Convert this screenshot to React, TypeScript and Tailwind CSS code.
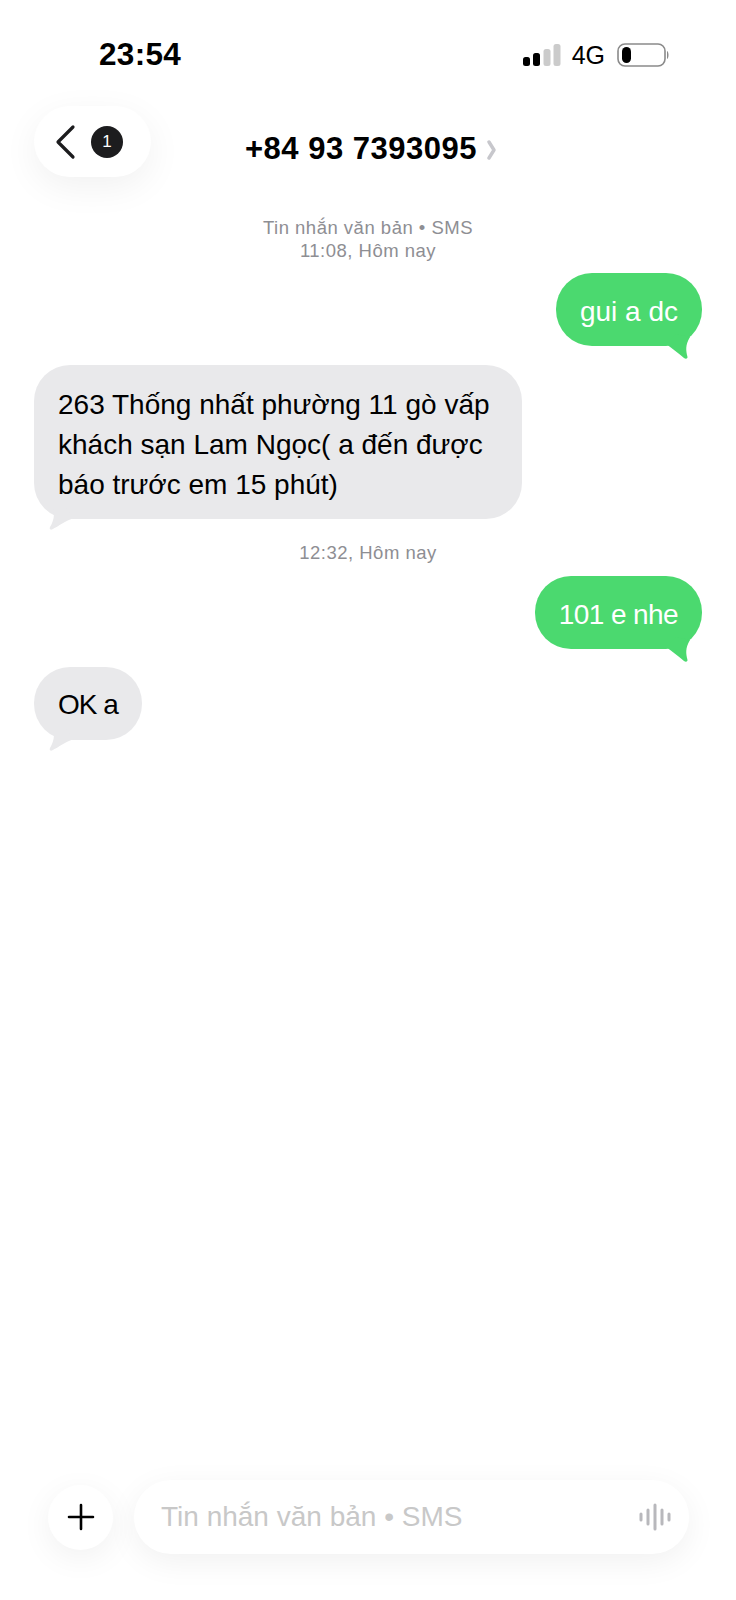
import React from "react";

function Tail({ side, color }: { side: "left" | "right"; color: string }) {
  if (side === "right") {
    return (
      <svg className="absolute right-[12px] bottom-[-14px]" width="26" height="26" viewBox="0 0 26 26">
        <path d="M2 10 C8 14 14 19 20 24 C22 25.5 24 24.5 23.4 22.5 C22 17 21 11 26 3 L12 0 Z" fill={color} />
      </svg>
    );
  }
  return (
    <svg className="absolute left-[14px] bottom-[-11px]" width="26" height="24" viewBox="0 0 26 24">
      <path d="M4 0 C8 8 5 16 2 21 C1 23 2.5 24 4 23.5 C11 20 17 15 26 12 L16 0 Z" fill={color} />
    </svg>
  );
}

function Green({ text, className, textClass }: { text: string; className?: string; textClass?: string }) {
  return (
    <div className={`relative self-end bg-[#4bd96f] rounded-[36px] h-[73px] px-[24px] flex items-center text-white text-[28px] ${className ?? ""}`}>
      <span className={`relative z-10 pt-[5px] ${textClass ?? ""}`}>{text}</span>
      <Tail side="right" color="#4bd96f" />
    </div>
  );
}

function Grey({ children, className }: { children: React.ReactNode; className?: string }) {
  return (
    <div className={`relative self-start bg-[#e9e9eb] rounded-[36px] px-[24px] text-black text-[28px] ${className ?? ""}`}>
      <div className="relative z-10">{children}</div>
      <Tail side="left" color="#e9e9eb" />
    </div>
  );
}

export default function App() {
  return (
    <div className="w-[736px] h-[1600px] bg-white flex flex-col overflow-hidden font-['Liberation_Sans',sans-serif]">
      {/* status bar */}
      <div className="flex items-center justify-between pl-[99px] pr-[66px] pt-[36px] h-[74px]">
        <span className="text-[31.5px] font-bold text-black leading-none tracking-[0.3px]">23:54</span>
        <div className="flex items-center">
          <svg width="38" height="24" viewBox="0 0 38 24" className="mr-[11px]">
            <rect x="0" y="14" width="7" height="9" rx="2.5" fill="#000" />
            <rect x="10" y="10" width="7" height="13" rx="2.5" fill="#000" />
            <rect x="20.5" y="6" width="7" height="17" rx="2.5" fill="#cbcbcb" />
            <rect x="30.5" y="1" width="7" height="22" rx="2.5" fill="#cbcbcb" />
          </svg>
          <span className="text-[25px] text-black leading-none mr-[12px]">4G</span>
          <svg width="53" height="24" viewBox="0 0 53 24">
            <rect x="1" y="1" width="47" height="22" rx="7" fill="none" stroke="#8a8a8a" strokeWidth="1.6" />
            <rect x="5" y="4" width="9" height="16" rx="4.5" fill="#000" />
            <path d="M50 8 C52 9 52 15 50 16 Z" fill="#8a8a8a" />
          </svg>
        </div>
      </div>

      {/* header */}
      <div className="grid grid-cols-[1fr_auto_1fr] items-start pl-[34px] pr-[34px] pt-[32px]">
        <div className="w-[117px] h-[71px] rounded-full bg-white shadow-[0_10px_36px_rgba(0,0,0,0.06)] flex items-center pl-[19px]">
          <svg width="26" height="36" viewBox="0 0 26 36" fill="none" stroke="#1c1c1e" strokeWidth="3.2" strokeLinecap="round" strokeLinejoin="round">
            <path d="M20 3 L5 18 L20 33" />
          </svg>
          <span className="ml-[12px] w-[32px] h-[32px] rounded-full bg-[#1c1c1e] text-white text-[17px] flex items-center justify-center">1</span>
        </div>
        <div className="flex items-center pt-[27px] pl-[7px]">
          <span className="text-[31px] font-bold text-black leading-none tracking-[0.5px]">+84 93 7393095</span>
          <svg width="12" height="20" viewBox="0 0 12 20" className="ml-[9px] mt-[2px]" fill="none" stroke="#c7c7cc" strokeWidth="3.4" strokeLinecap="round" strokeLinejoin="round">
            <path d="M3 2 L8 10 L3 18" />
          </svg>
        </div>
        <div />
      </div>

      {/* messages */}
      <div className="flex flex-col px-[34px] pt-[39px]">
        <div className="text-center text-[#8e8e93] text-[18.5px] leading-[23px] tracking-[0.5px]">
          <div>Tin nhắn văn bản • SMS</div>
          <div>11:08, Hôm nay</div>
        </div>
        <Green text="gui a dc" className="mt-[11px]" />
        <Grey className="mt-[19px] pt-[20px] pb-[14px] leading-[40px] w-[488px]">
          <div>263 Thống nhất phường 11 gò vấp</div>
          <div>khách sạn Lam Ngọc( a đến được</div>
          <div>báo trước em 15 phút)</div>
        </Grey>
        <div className="text-center text-[#8e8e93] text-[18.5px] leading-[23px] tracking-[0.5px] mt-[22px]">12:32, Hôm nay</div>
        <Green text="101 e nhe" textClass="tracking-[-0.6px]" className="mt-[12px]" />
        <Grey className="mt-[18px] h-[73px] flex items-center tracking-[-1px] pt-[3px]">OK a</Grey>
      </div>

      {/* composer */}
      <div className="mt-auto flex items-center pl-[48px] pr-[47px] pb-[46px] gap-[21px]">
        <div className="w-[65px] h-[65px] rounded-full bg-white shadow-[0_8px_32px_rgba(0,0,0,0.06)] flex items-center justify-center">
          <svg width="28" height="28" viewBox="0 0 28 28" stroke="#000" strokeWidth="2.6" strokeLinecap="round">
            <path d="M14 2 V26 M2 14 H26" />
          </svg>
        </div>
        <div className="flex-1 h-[74px] rounded-full bg-white shadow-[0_8px_32px_rgba(0,0,0,0.06)] flex items-center justify-between pl-[27px] pr-[18px]">
          <span className="text-[#c8c8c8] text-[28px]">Tin nhắn văn bản • SMS</span>
          <svg width="32" height="28" viewBox="0 0 32 28" stroke="#b8b8bc" strokeWidth="3" strokeLinecap="round">
            <path d="M2 11 V17 M9 7 V21 M16 2 V26 M23 7 V21 M30 11 V17" />
          </svg>
        </div>
      </div>
    </div>
  );
}
